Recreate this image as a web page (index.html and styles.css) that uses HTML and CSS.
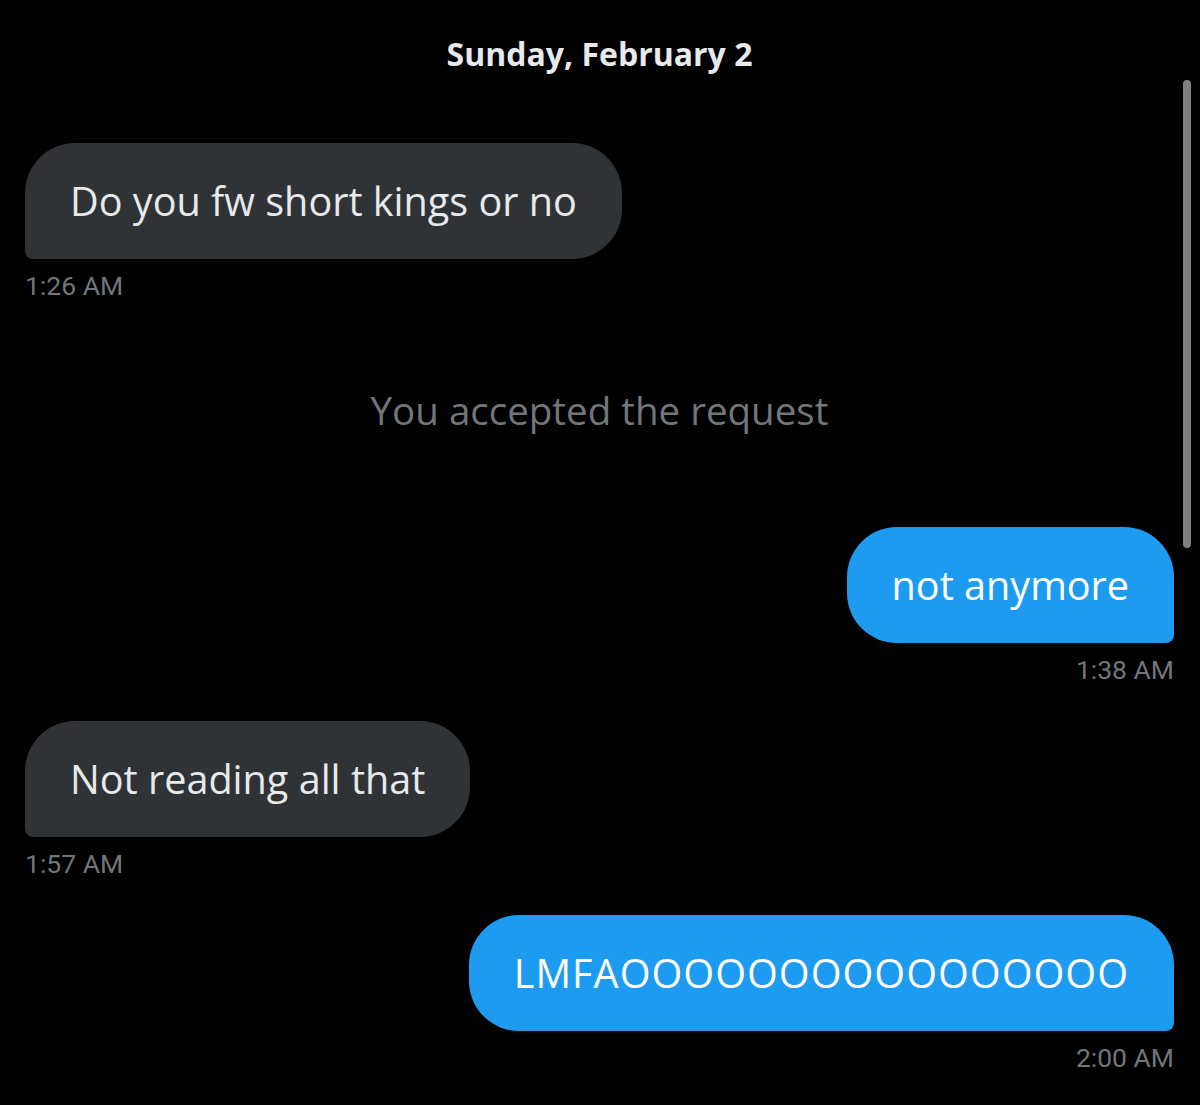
FILE: index.html
```html
<!DOCTYPE html>
<html lang="en">
<head>
    <meta charset="UTF-8">
    <meta name="viewport" content="width=device-width, initial-scale=1.0">
    <title>Messages</title>
    <link rel="stylesheet" href="styles.css">
</head>
<body>
    <div class="chat">
        <div class="day">Sunday, February 2</div>

        <div class="msg them">
            <div class="bubble">Do you fw short kings or no</div>
            <div class="time">1:26 AM</div>
        </div>

        <div class="notice">You accepted the request</div>

        <div class="msg me">
            <div class="bubble">not anymore</div>
            <div class="time">1:38 AM</div>
        </div>

        <div class="msg them">
            <div class="bubble">Not reading all that</div>
            <div class="time">1:57 AM</div>
        </div>

        <div class="msg me">
            <div class="bubble caps">LMFAOOOOOOOOOOOOOOOO</div>
            <div class="time">2:00 AM</div>
        </div>

        <div class="scrollbar"></div>
    </div>
</body>
</html>
```

FILE: styles.css
```css
* {
    margin: 0;
    padding: 0;
    box-sizing: border-box;
}

body {
    background: #000;
    font-family: "Open Sans", "Noto Sans", sans-serif;
    color: #e7e9ea;
}

.chat {
    position: relative;
    width: 1200px;
    height: 1105px;
    padding: 34px 26px 0 25px;
    display: flex;
    flex-direction: column;
    overflow: hidden;
}

.day {
    text-align: center;
    font-size: 32px;
    font-weight: 700;
    line-height: 40px;
    margin-bottom: 69px;
}

.msg {
    display: flex;
    flex-direction: column;
    margin-bottom: 36px;
}

.msg.them {
    align-items: flex-start;
}

.msg.me {
    align-items: flex-end;
}

.bubble {
    height: 116px;
    line-height: 116px;
    padding: 0 45px;
    font-size: 39.6px;
    border-radius: 50px;
    white-space: nowrap;
}

.bubble.caps {
    letter-spacing: 1.05px;
}

.them .bubble {
    background: #2f3336;
    color: #e7e9ea;
    border-bottom-left-radius: 8px;
}

.me .bubble {
    background: #1d9bf0;
    color: #fff;
    border-bottom-right-radius: 8px;
}

.time {
    font-family: Roboto, "Liberation Sans", sans-serif;
    font-size: 26.5px;
    line-height: 30px;
    margin-top: 12px;
    color: #71767b;
}

.notice {
    text-align: center;
    font-size: 38.5px;
    line-height: 50px;
    color: #71767b;
    margin-top: 48px;
    margin-bottom: 92px;
}

.scrollbar {
    position: absolute;
    top: 80px;
    right: 9px;
    width: 8px;
    height: 468px;
    border-radius: 4px;
    background: #7f7f7f;
}
```
